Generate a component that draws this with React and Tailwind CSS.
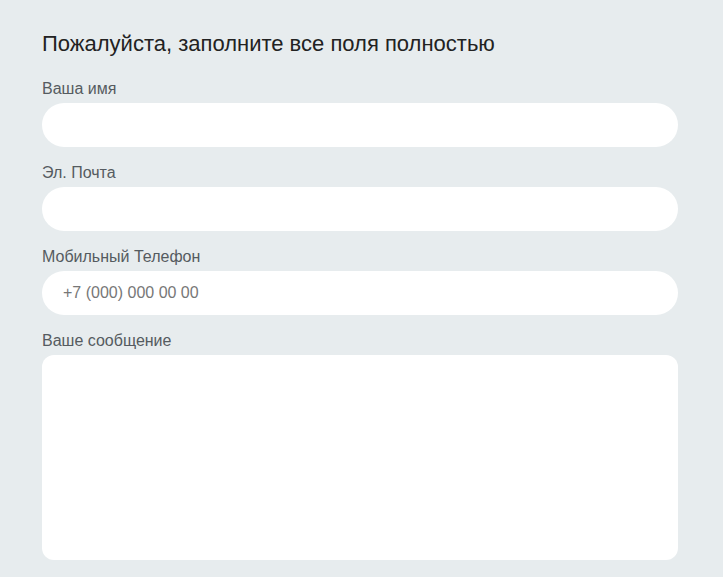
import React from 'react';

// Contact form - all fields required
const Field = ({ label, children }) => (
  <div className="flex flex-col">
    <label className="text-[16px] leading-[21px] text-[#555b60] mb-[4px]">{label}</label>
    {children}
  </div>
);

export default function App() {
  return (
    <div
      className="min-h-[577px] bg-[#e7ecee] pl-[42px] pt-[31px] pb-[17px]"
      style={{ fontFamily: '"Liberation Sans", Arial, sans-serif' }}
    >
      <div className="w-[636px] flex flex-col">
        <h2 className="text-[22px] leading-[26px] text-[#222] mb-[21px]">
          Пожалуйста, заполните все поля полностью
        </h2>
        <div className="flex flex-col gap-[15px]">
          <Field label="Ваша имя">
            <input type="text" className="h-[44px] rounded-full bg-white px-[21px] text-[16px] outline-none" />
          </Field>
          <Field label="Эл. Почта">
            <input type="email" className="h-[44px] rounded-full bg-white px-[21px] text-[16px] outline-none" />
          </Field>
          <Field label="Мобильный Телефон">
            <input
              type="tel"
              placeholder="+7 (000) 000 00 00"
              className="h-[44px] rounded-full bg-white px-[21px] text-[16px] text-[#333] placeholder:text-[#777] outline-none"
            />
          </Field>
          <Field label="Ваше сообщение">
            <textarea className="h-[205px] rounded-[12px] bg-white p-[21px] text-[16px] outline-none resize-none" />
          </Field>
        </div>
      </div>
    </div>
  );
}
